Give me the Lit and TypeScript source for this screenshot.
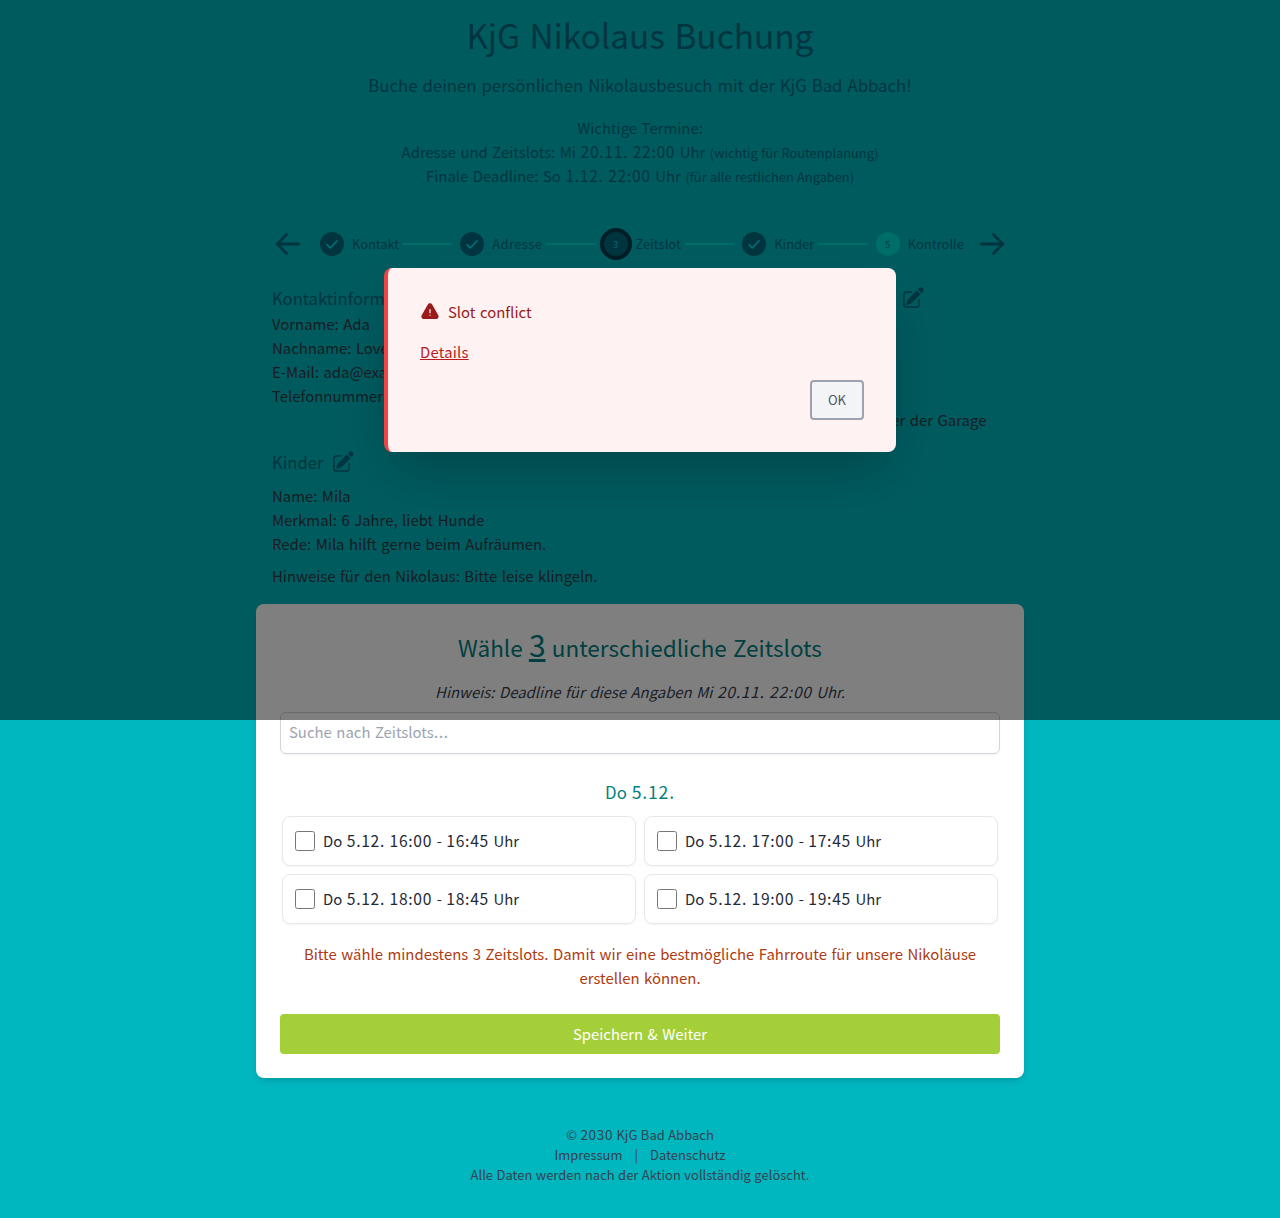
import { LitElement, html, css, svg } from "lit";

/* Digit groups are set a little wider than the running text. */
const t = (text: string) =>
  text.split(/(\d[\d.:]*\d\.?|\d|\.\.\.)/).map((part, i) => (i % 2 ? html`<span class="num">${part}</span>` : part));

const editIcon = html`<svg class="edit" viewBox="0 0 24 24" fill="currentColor">
  <path d="M21.731 2.269a2.625 2.625 0 0 0-3.712 0l-1.157 1.157 3.712 3.712 1.157-1.157a2.625 2.625 0 0 0 0-3.712zM19.513 8.199l-3.712-3.712-8.4 8.4a5.25 5.25 0 0 0-1.32 2.214l-.8 2.685a.75.75 0 0 0 .933.933l2.685-.8a5.25 5.25 0 0 0 2.214-1.32l8.4-8.4z" />
  <path d="M5.25 5.25a3 3 0 0 0-3 3v10.5a3 3 0 0 0 3 3h10.5a3 3 0 0 0 3-3V13.5a.75.75 0 0 0-1.5 0v5.25a1.5 1.5 0 0 1-1.5 1.5H5.25a1.5 1.5 0 0 1-1.5-1.5V8.25a1.5 1.5 0 0 1 1.5-1.5h5.25a.75.75 0 0 0 0-1.5H5.25z" />
</svg>`;

const warnIcon = html`<svg class="warn" viewBox="0 0 24 24" fill="currentColor">
  <path fill-rule="evenodd" d="M9.401 3.003c1.155-2 4.043-2 5.197 0l7.355 12.748c1.154 2-.29 4.5-2.599 4.5H4.645c-2.309 0-3.752-2.5-2.598-4.5L9.4 3.003zM12 8.25a.75.75 0 0 1 .75.75v3.75a.75.75 0 0 1-1.5 0V9a.75.75 0 0 1 .75-.75zm0 8.25a.75.75 0 1 0 0-1.5.75.75 0 0 0 0 1.5z" />
</svg>`;

const arrow = (d: string) => html`<svg class="arrow" viewBox="0 0 32 32">${svg`<path d=${d} />`}</svg>`;

const steps = [
  { label: "Kontakt", state: "done" },
  { label: "Adresse", state: "done" },
  { label: "Zeitslot", state: "current" },
  { label: "Kinder", state: "done" },
  { label: "Kontrolle", state: "open" },
];

const slots = ["16:00 - 16:45", "17:00 - 17:45", "18:00 - 18:45", "19:00 - 19:45"];

class AppRoot extends LitElement {
  static styles = css`
    :host {
      display: block;
      height: 1218px;
      background: #00b6bf;
      color: #1f2937;
      font: 400 14.9px/24px "Noto Sans CJK JP", "Open Sans", sans-serif;
      word-spacing: 0.08em;
      overflow: hidden;
    }
    * { box-sizing: border-box; margin: 0; }
    .num { font-size: 1.05em; line-height: 0; letter-spacing: 0.045em; }
    .page { width: 768px; margin: 0 auto; }
    header { padding-top: 16px; text-align: center; color: #006b80; }
    h1 { height: 40px; font-size: 33.4px; line-height: 37px; font-weight: 400; word-spacing: 0.06em; }
    .sub { margin-top: 16px; font-size: 16.75px; line-height: 27px; height: 28px; }
    .dates { margin-top: 16px; }
    .dates div { height: 24px; }
    .dates small { font-size: 12.8px; line-height: 0; word-spacing: 0.04em; }
    .steps { display: flex; align-items: center; height: 32px; margin-top: 40px; padding: 0 16px; color: #006b80; }
    .arrow { width: 32px; height: 32px; flex: none; fill: none; stroke: #006b80; stroke-width: 2.8; stroke-linecap: round; stroke-linejoin: round; }
    .track { flex: 1; display: flex; align-items: center; margin: 0 12px 0 16px; font-size: 13px; }
    .dot { width: 24px; height: 24px; flex: none; border-radius: 50%; background: #006b80; display: grid; place-items: center; font-size: 9.4px; line-height: 23px; color: #00e5f5; }
    .dot svg { width: 16px; height: 16px; fill: none; stroke: currentColor; stroke-width: 1.5; stroke-linecap: round; stroke-linejoin: round; }
    .label { margin-left: 8px; line-height: 23px; padding-bottom: 1px; }
    .label.kontakt { letter-spacing: -0.1px; }
    .label.adresse { letter-spacing: 0.35px; }
    .current { box-shadow: 0 0 0 4px #003d4a; color: #00c4d6; }
    .open { background: #00dcd0; color: #006b80; }
    .line { flex: 1; height: 2px; margin: 0 8px 0 4px; background: #00dcd0; }
    .summary { padding: 24px 16px 0; color: #303a47; }
    .cols { display: grid; grid-template-columns: 459px 1fr; }
    h3 { display: flex; align-items: center; gap: 8px; height: 28px; padding-bottom: 1px; font-size: 16.6px; font-weight: 400; word-spacing: 0; color: #006b80; }
    .edit { width: 24px; height: 24px; margin-left: -0.5px; }
    .kids { margin-top: 16px; }
    .kids .list { margin-top: 8px; }
    .note { margin-top: 8px; }
    .card { height: 474px; margin-top: 16px; padding: 24px; border-radius: 8px; background: #fff; text-align: center; box-shadow: 0 4px 6px -1px rgba(0, 0, 0, 0.1), 0 2px 4px -2px rgba(0, 0, 0, 0.1); }
    h2 { height: 36px; font-size: 22.5px; line-height: 38px; font-weight: 400; color: #008080; }
    h2 u { font-size: 30px; line-height: 0; }
    .hint { margin-top: 16px; font-style: italic; color: #374151; }
    .search { display: block; width: 100%; height: 42px; margin-top: 8px; padding: 7px 8px; border: 1px solid #d1d5db; border-radius: 6px; box-shadow: 0 1px 2px rgba(0, 0, 0, 0.05); text-align: left; color: #9ca3af; }
    .day { margin-top: 24px; font-size: 16.8px; line-height: 28px; color: #008080; }
    .slots { display: grid; grid-template-columns: 1fr 1fr; gap: 8px; margin-top: 10px; padding: 0 2px; }
    .slot { display: flex; align-items: center; gap: 8px; height: 50px; padding: 0 12px; border: 1px solid #e5e7eb; border-radius: 8px; box-shadow: 0 1px 2px rgba(0, 0, 0, 0.05); }
    .slot input { width: 20px; height: 20px; flex: none; }
    .error { margin-top: 18px; color: #b03a10; }
    .save { height: 40px; margin-top: 24px; border-radius: 4px; background: #a5cf38; color: #fff; line-height: 40px; }
    footer { padding-top: 47px; text-align: center; font-size: 13px; line-height: 20px; color: #374151; word-spacing: 0.04em; }
    .links { display: flex; justify-content: center; gap: 12px; }
    .overlay { position: absolute; inset: 0 0 auto 0; height: 720px; display: grid; place-items: center; background: rgba(0, 0, 0, 0.5); }
    .modal { width: 512px; padding: 32px 32px 32px 32px; border-left: 4px solid #ef4444; border-radius: 8px; background: #fef2f2; box-shadow: 0 25px 50px -12px rgba(0, 0, 0, 0.25); color: #991b1b; }
    .modal-title { display: flex; align-items: center; gap: 8px; }
    .warn { width: 20px; height: 20px; }
    .details { margin-top: 16px; color: #b91c1c; letter-spacing: 0.2px; text-decoration: underline; }
    .actions { display: flex; justify-content: flex-end; margin-top: 16px; }
    .ok { width: 54px; height: 40px; border: 2px solid #9ca3af; border-radius: 4px; background: #f3f4f6; color: #4b5563; font-size: 13px; line-height: 35px; text-align: center; }
  `;

  render() {
    return html`
      <div class="page">
        <header>
          <h1>KjG Nikolaus Buchung</h1>
          <p class="sub">Buche deinen persönlichen Nikolausbesuch mit der KjG Bad Abbach!</p>
          <div class="dates">
            <div>Wichtige Termine:</div>
            <div>${t("Adresse und Zeitslots: Mi 20.11. 22:00 Uhr")} <small>(wichtig für Routenplanung)</small></div>
            <div>${t("Finale Deadline: So 1.12. 22:00 Uhr")} <small>(für alle restlichen Angaben)</small></div>
          </div>
        </header>
        <nav class="steps">
          ${arrow("M5.2 16H26.7M14.6 6.6 5.2 16l9.4 9.4")}
          <div class="track">
            ${steps.map(
              (s, i) => html`${i ? html`<i class="line"></i>` : ""}
                <span class="dot ${s.state}">${s.state === "done" ? html`<svg viewBox="0 0 16 16"><path d="M3 8.8l3.2 3.1L13 4.9" /></svg>` : i + 1}</span>
                <span class="label ${s.label.toLowerCase()}">${s.label}</span>`
            )}
          </div>
          ${arrow("M26.8 16H5.3M17.4 6.6l9.4 9.4-9.4 9.4")}
        </nav>
        <section class="summary">
          <div class="cols">
            <div>
              <h3>Kontaktinformationen ${editIcon}</h3>
              <div>Vorname: Ada</div>
              <div>Nachname: Lovelace</div>
              <div>E-Mail: ada@example.com</div>
              <div>Telefonnummer: 0123</div>
            </div>
            <div>
              <h3>Adressinformationen ${editIcon}</h3>
              <div>Straße: Hauptstr.</div>
              <div>Hausnummer: 1</div>
              <div>PLZ: 93077</div>
              <div>Ort: Abbach</div>
              <div>Hinweise: Eingang hinter der Garage</div>
            </div>
          </div>
          <div class="kids">
            <h3>Kinder ${editIcon}</h3>
            <div class="list">
              <div>Name: Mila</div>
              <div>Merkmal: 6 Jahre, liebt Hunde</div>
              <div>Rede: Mila hilft gerne beim Aufräumen.</div>
            </div>
            <div class="note">Hinweise für den Nikolaus: Bitte leise klingeln.</div>
          </div>
        </section>
        <main class="card">
          <h2>Wähle <u>3</u> unterschiedliche Zeitslots</h2>
          <p class="hint">${t("Hinweis: Deadline für diese Angaben Mi 20.11. 22:00 Uhr.")}</p>
          <div class="search">${t("Suche nach Zeitslots...")}</div>
          <div class="day">${t("Do 5.12.")}</div>
          <div class="slots">
            ${slots.map((s) => html`<label class="slot"><input type="checkbox" /><span>${t(`Do 5.12. ${s} Uhr`)}</span></label>`)}
          </div>
          <p class="error">Bitte wähle mindestens 3 Zeitslots. Damit wir eine bestmögliche Fahrroute für unsere Nikoläuse erstellen können.</p>
          <div class="save">Speichern &amp; Weiter</div>
        </main>
        <footer>
          <div>${t("© 2030 KjG Bad Abbach")}</div>
          <div class="links"><span>Impressum</span><span>|</span><span>Datenschutz</span></div>
          <div>Alle Daten werden nach der Aktion vollständig gelöscht.</div>
        </footer>
      </div>
      <div class="overlay">
        <div class="modal" role="dialog">
          <div class="modal-title">${warnIcon}<span>Slot conflict</span></div>
          <div class="details">Details</div>
          <div class="actions"><div class="ok">OK</div></div>
        </div>
      </div>
    `;
  }
}
customElements.define("app-root", AppRoot);
